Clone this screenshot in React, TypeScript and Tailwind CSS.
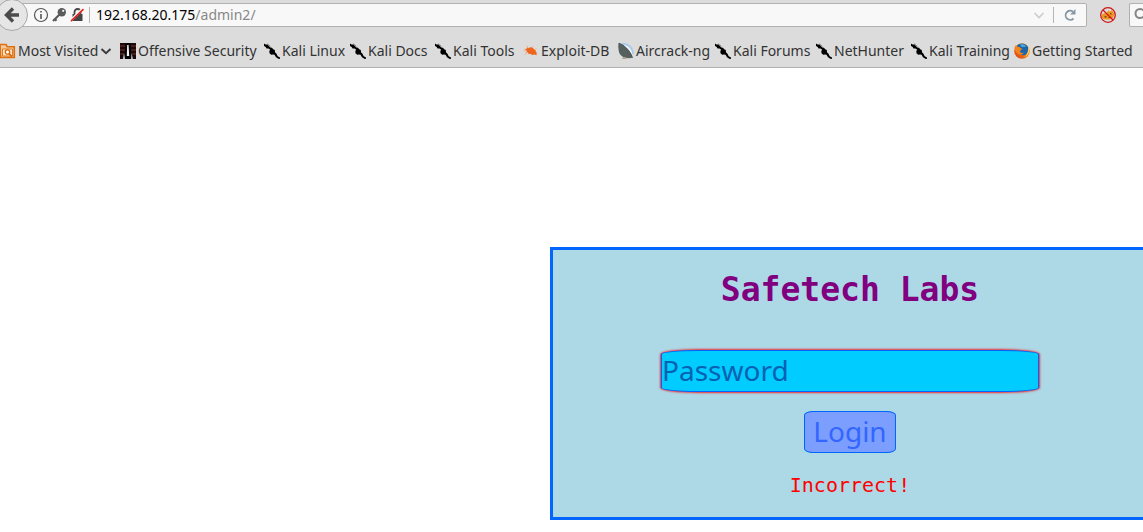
import type { ReactNode } from "react";

function FolderIcon() {
  return (
    <svg viewBox="0 0 16 16" className="size-4 shrink-0" aria-hidden="true">
      <path d="M0 1.500h6l1 2H14.500v11.500H0z" fill="#f3c9a0" />
      <path d="M0 1.500h6l1.200 2.200H14.300V14.500H.5z" fill="none" stroke="#dd6f0c" strokeWidth="1.600" />
      <path d="M2.500 6h10v7h-10z" fill="#fbe6d0" stroke="#e07818" strokeWidth="1" />
      <circle cx="7.500" cy="9" r="2.200" fill="#fff" stroke="#d96a08" strokeWidth="1.300" />
      <path d="M9 10.600l3 3" stroke="#d96a08" strokeWidth="1.500" />
    </svg>
  );
}

function OffensiveIcon() {
  return (
    <svg viewBox="0 0 16 16" className="size-4 shrink-0" aria-hidden="true">
      <path d="M0 0h16v16H0z" fill="#1c0a0a" />
      <path d="M0 2h5v2H0zM0 6h5v2H0zM0 10h4v2H0zM11 2h5v2h-5zM11 6h5v2h-5zM12 10h4v2h-4z" fill="#4a1c1c" />
      <path d="M5.500 0h5l1 16h-7z" fill="#050505" />
      <path d="M7.200 2h1.400l.6 11H6.800z" fill="#f4f4f4" />
      <path d="M4 10l1.200 6H2.800zM11.500 10l1.500 6h-2z" fill="#bbb" />
    </svg>
  );
}

function KaliIcon() {
  return (
    <svg viewBox="0 0 16 16" className="size-4 shrink-0" aria-hidden="true">
      <path
        d="M0 .6l1.500.9 2 .1 2.800 2.900 1.700.2 1.200 1.500 1.600.9.2 2.200 1.500 1.500 1.200 2.400 2.300 1.400v1.200l-1.200.2-2.800-1.800-1.500-2.500-1.500-.2-1.800.2-1.700-1.500-.2-2.200.9-1.200L4.500 5.600l-2-.2-.8-1.500L0 3z"
        fill="#000"
      />
      <path d="M3.200.8l3.200 2.600" stroke="#555" strokeWidth=".7" />
    </svg>
  );
}

function ExploitIcon() {
  return (
    <svg viewBox="0 0 16 16" className="size-4 shrink-0" aria-hidden="true">
      <path
        d="M1.500 5.800l2 .2.8-1.800 1.500 1L7.500 4l2.500 1 1.200 1.400 1.300.7.3 1.600 1.500 1.600-1 .3.5 1.700-2.500-.8-1.700.6-2.200-1.200-2-.1-.6-1.500-2 .2 1.200-1.600z"
        fill="#ee661b"
      />
      <path d="M4 2.500l1 2M10.500 3l-1 1.700M13.500 5.500l-2 1.200M1.500 11.500l2.800-1.400M.8 7.500l2.200.3" stroke="#f3a87c" strokeWidth=".8" />
    </svg>
  );
}

function AircrackIcon() {
  return (
    <svg viewBox="0 0 16 16" className="size-4 shrink-0" aria-hidden="true">
      <path d="M4 1C10 .5 14.300 4 15 11" fill="none" stroke="#a9c8ee" strokeWidth="2" />
      <path d="M4 2.600c5 .3 8 3 9.500 8" fill="none" stroke="#eef5ff" strokeWidth="1.600" />
      <path d="M.5 0C6 2 12 7 14.500 14.800 9 16 2.500 14.500 1 9 .2 6 .2 3 .5 0z" fill="#56615d" />
      <path d="M.5 0C6 2 12 7 14.500 14.800" fill="none" stroke="#343e3c" strokeWidth=".8" />
      <path d="M5 14l-1 2h5l-1-1.200z" fill="#b89f8a" />
    </svg>
  );
}

function FirefoxIcon() {
  return (
    <svg viewBox="0 0 16 16" className="size-4 shrink-0" aria-hidden="true">
      <defs>
        <linearGradient id="fox" x1="0" y1="1" x2="1" y2="0">
          <stop offset="0" stopColor="#d8350f" />
          <stop offset=".5" stopColor="#f07a13" />
          <stop offset="1" stopColor="#ffd84a" />
        </linearGradient>
      </defs>
      <circle cx="8" cy="8" r="7.800" fill="url(#fox)" />
      <path d="M3 2.500C6-.6 12-.2 14 4c1 3 .3 7-3 8-3 .8-6-.7-6.500-3z" fill="#1d65ad" />
      <path d="M6 1.600c2-.8 5 0 6 1.800-1 .6-3-.2-4 .8z" fill="#53acdc" />
      <path d="M.6 4.200l1-2 1.700 1.600 2.200.2 1 1.200 2 .6-1.800 1.400-.8 1.500c1 1.400 2.700 1.500 4 .9-.7 2-3.600 2.800-5.800 1.300C1.800 9.500.8 7 .6 4.200z" fill="#f1851b" />
      <path d="M14.500 4c1.500 4-.2 9-4.500 10.200 3-2.200 4.200-5.200 4.500-10.200z" fill="#ffdc50" />
    </svg>
  );
}

const kali = <KaliIcon />;

const bookmarks: { label: string; icon: ReactNode }[] = [
  { label: "Offensive Security", icon: <OffensiveIcon /> },
  { label: "Kali Linux", icon: kali },
  { label: "Kali Docs", icon: kali },
  { label: "Kali Tools", icon: kali },
  { label: "Exploit-DB", icon: <ExploitIcon /> },
  { label: "Aircrack-ng", icon: <AircrackIcon /> },
  { label: "Kali Forums", icon: kali },
  { label: "NetHunter", icon: kali },
  { label: "Kali Training", icon: kali },
  { label: "Getting Started", icon: <FirefoxIcon /> },
];

function BackButton() {
  return (
    <button type="button" aria-label="Back" className="relative z-10 -my-1 -ml-1 size-8 shrink-0 rounded-full border border-[#a9a9a9] bg-[#e6e6e6]">
      <svg viewBox="0 0 30 30" className="size-full" aria-hidden="true">
        <path d="M16 8.500L9.500 15l6.500 6.500M10.500 15H22" fill="none" stroke="#4b4b4b" strokeWidth="3.400" />
      </svg>
    </button>
  );
}

function AddressBar() {
  return (
    <div className="-ml-4 flex h-6 min-w-0 grow items-center rounded-r-xs border border-[#b1b1b1] bg-[#f8f8f8] pr-2 pl-5">
      <svg viewBox="0 0 52 16" className="h-4 w-13 shrink-0" aria-hidden="true">
        <circle cx="8" cy="8" r="6.500" fill="none" stroke="#555" strokeWidth="1.200" />
        <path d="M8 7v5M8 4v1.600" stroke="#555" strokeWidth="1.600" />
        <circle cx="28.800" cy="5.200" r="4.200" fill="#5b5b5b" />
        <circle cx="30.200" cy="3.800" r="1.100" fill="#f8f8f8" />
        <path d="M26.500 7.500l-6.500 6.500M21.800 12l1.700 1.700" stroke="#5b5b5b" strokeWidth="2.200" />
        <path d="M39.500 7h10v7h-10z" fill="#454545" />
        <path d="M41.500 7V5a3 3 0 0 1 6 0v2" fill="none" stroke="#454545" strokeWidth="1.800" />
        <path d="M37.500 13.800L49.500 2" stroke="#f8f8f8" strokeWidth="2.600" />
        <path d="M38 14.200L50.500 2.200" stroke="#e0231f" strokeWidth="1.600" />
      </svg>
      <span className="mr-1.5 ml-1 h-4 w-px shrink-0 bg-[#b5b5b5]" />
      <div className="relative min-w-0 grow text-sm">
        <input aria-label="Address" defaultValue="192.168.20.175/admin2/" className="block h-5 w-full bg-transparent text-transparent outline-none" />
        <span aria-hidden="true" className="pointer-events-none absolute inset-0 leading-5 text-[#888]">
          <span className="text-black">192.168.20.175</span>/admin2/
        </span>
      </div>
      <button type="button" aria-label="Show history" className="mr-2">
        <svg viewBox="0 0 12 12" className="size-3" aria-hidden="true">
          <path d="M1.500 4L6 8.500 10.500 4" fill="none" stroke="#cbcbcb" strokeWidth="1.600" />
        </svg>
      </button>
      <span className="mr-2 h-4 w-px bg-[#b5b5b5]" />
      <button type="button" aria-label="Reload">
        <svg viewBox="0 0 16 16" className="size-4" aria-hidden="true">
          <path d="M11 4.600A4.600 4.600 0 1 0 11.500 11.500" fill="none" stroke="#8796a4" strokeWidth="1.800" />
          <path d="M13.500 2v5.500H8z" fill="#8796a4" />
        </svg>
      </button>
    </div>
  );
}

export default function App() {
  return (
    <div className="min-h-screen overflow-x-clip bg-white font-['Noto_Sans',sans-serif]">
      <header className="h-17 border-b border-[#b0b0b0] bg-[#dcdcdc] text-sm text-[#333]">
        <div className="flex h-[30px] items-center">
          <BackButton />
          <AddressBar />
          <button type="button" aria-label="Blocked content" className="mx-3 shrink-0">
            <svg viewBox="0 0 18 18" className="size-[18px]" aria-hidden="true">
              <path d="M3 8.500l2.500-1.500 2 1 1.500-3.500 2 1 2-1.500L15.500 8l-1.500 4-3 1.500H6L3 12z" fill="#ef941d" />
              <path d="M5.500 10h2v1.500h-2zM11 7h1.500v1.500H11zM9.500 11H12v1H9.500z" fill="#7b4a12" />
              <circle cx="9" cy="9" r="7.300" fill="none" stroke="#cf1616" strokeWidth="1.300" />
              <path d="M4 4l10 10" stroke="#cf1616" strokeWidth="1.300" />
            </svg>
          </button>
          <button type="button" aria-label="Search" className="flex h-6 w-[14px] shrink-0 items-center overflow-hidden rounded-l-xs border border-r-0 border-[#b1b1b1] bg-[#f8f8f8] pl-1">
            <svg viewBox="0 0 16 16" className="size-4 shrink-0" aria-hidden="true">
              <circle cx="6" cy="6.500" r="4.500" fill="none" stroke="#858585" strokeWidth="2" />
              <path d="M9 10l5 5" stroke="#858585" strokeWidth="2" />
            </svg>
          </button>
        </div>
        <nav aria-label="Bookmarks" className="grid h-[42px] grid-cols-[120px_144px_86px_85px_88px_95px_97px_101px_95px_103px_auto] items-center whitespace-nowrap">
          <button type="button" className="flex items-center gap-0.5">
            <FolderIcon />
            <span>Most Visited</span>
            <svg viewBox="0 0 12 12" className="size-3 shrink-0" aria-hidden="true">
              <path d="M1.500 4L6 8.200 10.500 4" fill="none" stroke="#3b3b3b" strokeWidth="2" />
            </svg>
          </button>
          {bookmarks.map((b) => (
            <a key={b.label} href="#" className="flex items-center gap-0.5">
              {b.icon}
              <span>{b.label}</span>
            </a>
          ))}
        </nav>
      </header>
      <main className="flex pt-[179px] pl-[550px]">
        <form
          onSubmit={(e) => e.preventDefault()}
          className="flex w-[600px] shrink-0 flex-col items-center border-3 border-[#0066ff] bg-[#add8e6] pt-[18px] pb-4 font-['DejaVu_Sans_Mono',monospace]"
        >
          <h1 className="text-[33px] leading-[44px] font-bold text-[#800080]">Safetech Labs</h1>
          <input
            aria-label="Password"
            type="password"
            placeholder="Password"
            className="mt-[38px] h-[42px] w-[378px] rounded-[10%] border border-[#0066ff] bg-[#00ccff] pb-0.5 font-['Noto_Sans',sans-serif] text-[28px] text-[#0066ff] shadow-[0_0_2px_1px_#ff0000cc] outline-none placeholder:text-[#0761b1]"
          />
          <button
            type="submit"
            className="mt-[19px] h-[42px] rounded-[10%] border border-[#0066ff] bg-[#7b9eff] px-2 pb-0.5 font-['Noto_Sans',sans-serif] text-[28px] leading-[38px] text-[#3366ff]"
          >
            Login
          </button>
          <p className="mt-4 text-xl leading-8 text-[#ff0000]">Incorrect!</p>
        </form>
      </main>
    </div>
  );
}
